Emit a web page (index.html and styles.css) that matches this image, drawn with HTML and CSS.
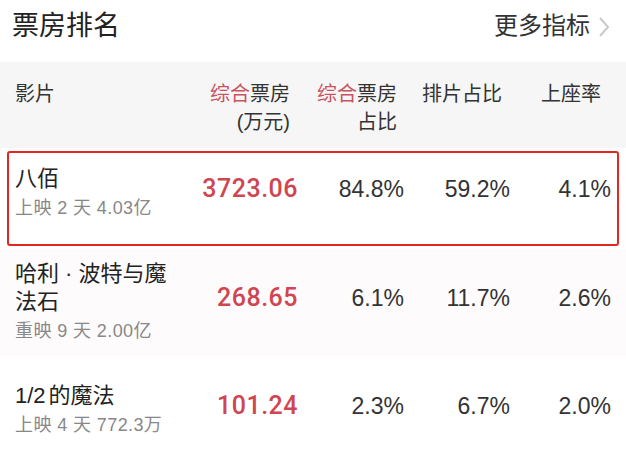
FILE: index.html
```html
<!DOCTYPE html>
<html lang="zh-CN">
<head>
<meta charset="utf-8">
<link rel="stylesheet" href="styles.css">
</head>
<body>
<div class="page">
  <div class="topbar">
    <div class="title">票房排名</div>
    <div class="more">更多指标
      <svg class="chev" width="12" height="22" viewBox="0 0 12 22"><polyline points="2,2 10,11 2,20" fill="none" stroke="#c9c9c9" stroke-width="2"/></svg>
    </div>
  </div>
  <div class="thead">
    <div class="hc name">影片</div>
    <div class="hc c2"><span class="hl">综合</span>票房<br>(万元)</div>
    <div class="hc c3"><span class="hl">综合</span>票房<br>占比</div>
    <div class="hc c4">排片占比</div>
    <div class="hc c5">上座率</div>
  </div>
  <div class="row hot">
    <div class="film"><div class="fname">八佰</div><div class="fsub">上映 2 天 4.03亿</div></div>
    <div class="num box">3723.06</div>
    <div class="num">84.8%</div>
    <div class="num">59.2%</div>
    <div class="num">4.1%</div>
  </div>
  <div class="row r2">
    <div class="film"><div class="fname">哈利 · 波特与魔法石</div><div class="fsub">重映 9 天 2.00亿</div></div>
    <div class="num box">268.65</div>
    <div class="num">6.1%</div>
    <div class="num">11.7%</div>
    <div class="num">2.6%</div>
  </div>
  <div class="row r3">
    <div class="film"><div class="fname">1/2<span class="thin"></span>的魔法</div><div class="fsub">上映 4 天 772.3万</div></div>
    <div class="num box">101.24</div>
    <div class="num">2.3%</div>
    <div class="num">6.7%</div>
    <div class="num">2.0%</div>
  </div>
</div>
</body>
</html>
```
FILE: styles.css
```css
* { box-sizing: border-box; }
html, body { margin: 0; padding: 0; background: #fff; }
body {
  width: 626px;
  height: 451px;
  overflow: hidden;
  font-family: "Liberation Sans", "Noto Sans CJK SC", sans-serif;
  color: #333;
}
.topbar {
  height: 62px;
  padding: 8px 16px 0 12px;
  display: flex;
  justify-content: space-between;
  align-items: flex-start;
}
.title {
  font-size: 27px;
  line-height: 36px;
  color: #222;
}
.more {
  font-size: 24px;
  line-height: 36px;
  color: #333;
  display: flex;
  align-items: center;
  gap: 8px;
}
.chev { display: block; margin-top: 1px; }
.thead {
  background: #f6f6f6;
  height: 86px;
  padding: 18px 15px 0 15px;
  display: grid;
  grid-template-columns: 185px 98px 106px 106px 101px;
  font-size: 20px;
  line-height: 28px;
  color: #333;
}
.hc { text-align: right; }
.hc.name { text-align: left; }
.hc.c2 { padding-right: 8px; }
.hc.c3 { padding-right: 7px; }
.hc.c4 { padding-right: 8px; }
.hc.c5 { padding-right: 10px; }
.hl { color: #c9535e; }
.row {
  display: grid;
  grid-template-columns: 185px 98px 106px 106px 101px;
  padding: 0 15px;
  align-items: center;
}
.row.hot {
  margin: 3px 7px 3px 7px;
  border: 2px solid #e3261f;
  border-radius: 3px;
  padding: 12px 6px 24px 6px;
}
.row.r2 {
  background: #fdfbfb;
  padding-top: 11px;
  padding-bottom: 13px;
}
.row.r3 {
  padding-top: 26px;
  padding-bottom: 14px;
}
.film { padding-right: 15px; }
.fname {
  font-size: 22px;
  line-height: 28px;
  color: #222;
  width: 160px;
}
.thin { display: inline-block; width: 3px; }
.fsub {
  margin-top: 3px;
  font-size: 18px;
  line-height: 24px;
  letter-spacing: 0.4px;
  color: #888;
}
.num {
  text-align: right;
  font-size: 23px;
  line-height: 28px;
  color: #333;
  margin-bottom: 8px;
}
.num.box {
  font-family: Roboto, "Liberation Sans", sans-serif;
  font-weight: 500;
  font-size: 25px;
  letter-spacing: 0.5px;
  color: #cf4650;
}
```
